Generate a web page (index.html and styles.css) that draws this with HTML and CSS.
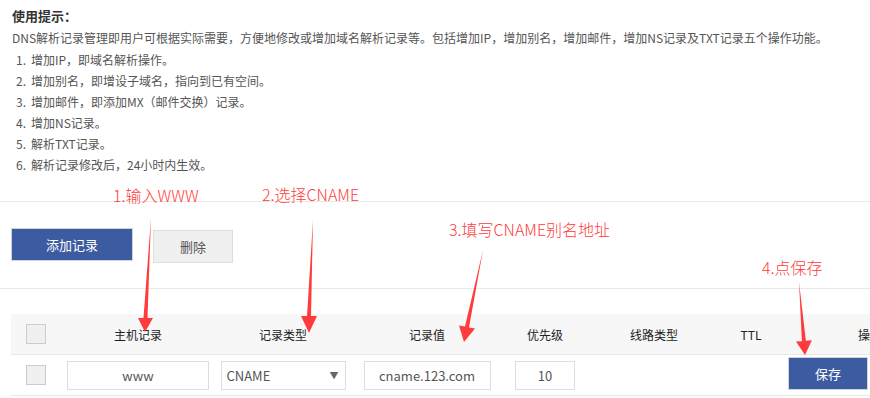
FILE: index.html
```html
<!DOCTYPE html>
<html lang="zh-CN">
<head>
    <meta charset="UTF-8">
    <title>DNS解析记录管理</title>
    <link rel="stylesheet" href="styles.css">
</head>
<body>
<div class="page">
    <div class="tips">
        <h3>使用提示：</h3>
        <p>DNS解析记录管理即用户可根据实际需要，方便地修改或增加域名解析记录等。包括增加IP，增加别名，增加邮件，增加NS记录及TXT记录五个操作功能。</p>
        <ol>
            <li><span class="num">1.</span>增加IP，即域名解析操作。</li>
            <li><span class="num">2.</span>增加别名，即增设子域名，指向到已有空间。</li>
            <li><span class="num">3.</span>增加邮件，即添加MX（邮件交换）记录。</li>
            <li><span class="num">4.</span>增加NS记录。</li>
            <li><span class="num">5.</span>解析TXT记录。</li>
            <li><span class="num">6.</span>解析记录修改后，24小时内生效。</li>
        </ol>
    </div>

    <div class="toolbar">
        <button class="btn btn-primary btn-add">添加记录</button>
        <button class="btn btn-default btn-del">删除</button>
    </div>

    <div class="records">
        <div class="row head">
            <div class="cell"><span class="check"></span></div>
            <div class="cell">主机记录</div>
            <div class="cell">记录类型</div>
            <div class="cell">记录值</div>
            <div class="cell">优先级</div>
            <div class="cell">线路类型</div>
            <div class="cell">TTL</div>
            <div class="cell">操作</div>
        </div>
        <div class="row body">
            <div class="cell"><span class="check"></span></div>
            <div class="cell"><span class="field f-host">www</span></div>
            <div class="cell"><span class="field f-type">CNAME<i class="caret">▼</i></span></div>
            <div class="cell"><span class="field f-value">cname.123.com</span></div>
            <div class="cell"><span class="field f-mx">10</span></div>
            <div class="cell"></div>
            <div class="cell"></div>
            <div class="cell op"><button class="btn btn-primary btn-save">保存</button></div>
        </div>
    </div>

    <!-- annotations -->
    <span class="note n1">1.输入WWW</span>
    <span class="note n2">2.选择CNAME</span>
    <span class="note n3">3.填写CNAME别名地址</span>
    <span class="note n4">4.点保存</span>
    <svg class="arrows" width="870" height="398" viewBox="0 0 870 398">
        <polygon points="151,218 147.5,318 153,318 145,332 138,318 143.5,318"/>
        <polygon points="313,220 311,316 317,316 309,333 301,316 307,316"/>
        <polygon points="483,250 469,327.4 475,328.6 464,342 459,325.4 465,326.6"/>
        <polygon points="799,282 805.9,340.8 811.9,340.3 805,355 796,341.6 801.9,341.2"/>
    </svg>
</div>
</body>
</html>
```

FILE: styles.css
```css
html, body {
    margin: 0;
    overflow: hidden;
}
body {
    font-family: "Noto Sans CJK SC", "Liberation Sans", sans-serif;
    font-size: 12px;
    color: #555;
    background: #fff;
}
.page {
    position: relative;
    width: 870px;
    height: 398px;
    overflow: hidden;
}
.tips {
    padding: 5px 12px 0;
    height: 196px;
    border-bottom: 1px solid #e8e8e8;
}
.tips h3 {
    margin: 0;
    font-size: 13px;
    line-height: 22px;
    color: #333;
}
.tips p {
    margin: 0;
    line-height: 22px;
}
.tips ol {
    margin: 0;
    padding: 0 0 0 4px;
    list-style: none;
}
.tips li {
    line-height: 21px;
}
.tips .num {
    display: inline-block;
    width: 15px;
}
.toolbar {
    display: flex;
    align-items: flex-start;
    gap: 20px;
    height: 60px;
    padding: 26px 0 0 11px;
    border-bottom: 1px solid #e8e8e8;
}
.btn {
    font-family: inherit;
    font-size: 13px;
    height: 33px;
    padding: 0;
    cursor: pointer;
}
.btn-primary {
    background: #3d5ba1;
    color: #fff;
    border: 1px solid #d0d4dc;
}
.btn-default {
    background: #f0f0f0;
    color: #555;
    border: 1px solid #ddd;
}
.btn-add { width: 122px; }
.btn-del { width: 80px; margin-top: 2px; }
.records {
    margin: 25px 0 0 11px;
}
.row {
    display: grid;
    grid-template-columns: 49px 156px 134px 154px 82px 136px 58px 180px;
    border-bottom: 1px solid #e8e8e8;
}
.row.head {
    height: 40px;
    background: #f7f7f7;
    color: #222;
}
.row.body {
    height: 40px;
}
.cell {
    display: flex;
    align-items: center;
    justify-content: center;
}
.cell.op {
    justify-content: flex-start;
    padding-left: 8px;
}
.check {
    display: block;
    width: 18px;
    height: 18px;
    background: #f0f0f0;
    border: 1px solid #ccc;
}
.field {
    display: flex;
    align-items: center;
    justify-content: center;
    box-sizing: border-box;
    height: 29px;
    border: 1px solid #ddd;
    font-size: 13px;
    color: #555;
    background: #fff;
}
.f-host { width: 142px; }
.f-type {
    width: 125px;
    justify-content: space-between;
    padding: 0 6px 0 5px;
}
.f-value { width: 127px; }
.f-mx { width: 60px; }
.caret {
    font-style: normal;
    font-size: 9px;
    color: #666;
}
.btn-save {
    width: 80px;
    margin-top: -4px;
}
.note {
    position: absolute;
    font-size: 16px;
    font-weight: 300;
    line-height: 20px;
    color: #ff3b3b;
    white-space: nowrap;
}
.n1 { left: 113px; top: 185px; }
.n2 { left: 262px; top: 184px; }
.n3 { left: 449px; top: 219px; }
.n4 { left: 762px; top: 257px; }
.arrows {
    position: absolute;
    left: 0;
    top: 0;
    pointer-events: none;
}
.arrows polygon {
    fill: #ff3b3b;
}
```
